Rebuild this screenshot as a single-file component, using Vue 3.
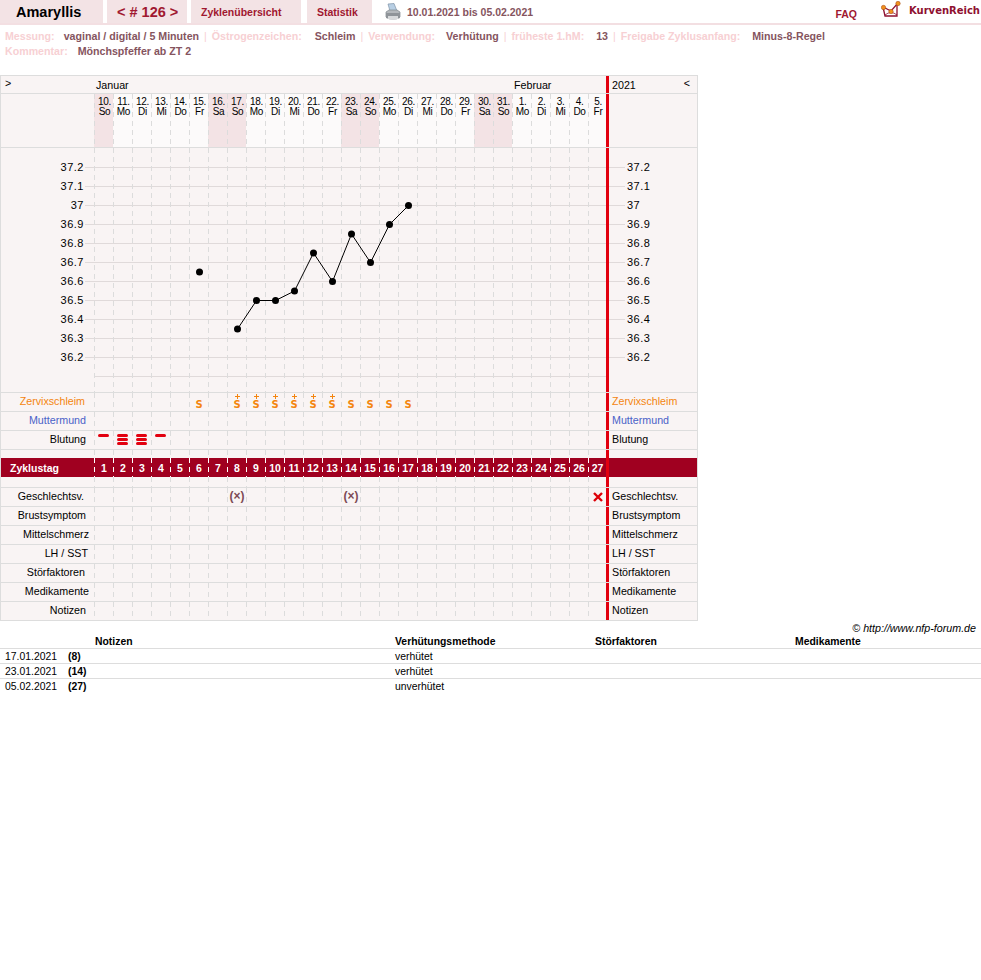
<template>
  <div class="page">
    <div class="nav">
      <div class="tab tab-name">Amaryllis</div>
      <div class="tab tab-num">&lt; # 126 &gt;</div>
      <div class="tab tab-link tab-zyklen">Zyklenübersicht</div>
      <div class="tab tab-link tab-stat">Statistik</div>
      <svg class="printer" width="16" height="18" viewBox="0 0 16 18">
        <path d="M3 1 L9 0.5 L12 8 L5 8 Z" fill="#b8cfe4" stroke="#7f93a8" stroke-width="0.7" />
        <path d="M1 9 L4 7 H12 L15 9 V14 H1 Z" fill="#b4b8bc" stroke="#80868c" stroke-width="0.7" />
        <path d="M1 10 H15 V15 Q8 18 1 15 Z" fill="#8f9499" />
        <path d="M3 13 H13 V16 Q8 17.5 3 16 Z" fill="#d8dadc" />
      </svg>
      <div class="period">10.01.2021 bis 05.02.2021</div>
      <div class="faq">FAQ</div>
      <div class="logo">
        <svg width="20" height="18" viewBox="0 0 20 18">
          <path d="M2 6 L4 15 H16 V3" fill="none" stroke="#8e1030" stroke-width="1.3" />
          <path d="M4 14 Q10 9 16 14" fill="none" stroke="#8e1030" stroke-width="0.8" />
          <path d="M2 6 L10 10 L17 2" fill="none" stroke="#8e1030" stroke-width="1.2" />
          <circle cx="2.5" cy="6.5" r="2.2" fill="#f0921e" stroke="#a04010" stroke-width="0.5" />
          <circle cx="10" cy="10.5" r="2.2" fill="#f0921e" stroke="#a04010" stroke-width="0.5" />
          <circle cx="17" cy="2.5" r="2.2" fill="#f0921e" stroke="#a04010" stroke-width="0.5" />
        </svg>
        <span class="logo-text">KurvenReich</span>
      </div>
    </div>

    <div class="info">
      <div class="info-line">
        <template v-for="(item, i) in info" :key="item.label">
          <span v-if="i" class="sep">|</span>
          <span class="info-label">{{ item.label }}</span>
          <span class="info-value" :style="{ marginLeft: item.gap + 'px' }">{{ item.value }}</span>
        </template>
      </div>
      <div class="info-line">
        <span class="info-label">Kommentar:</span>
        <span class="info-value">Mönchspfeffer ab ZT 2</span>
      </div>
    </div>

    <div class="chart">
      <div class="row row-head">
        <div class="label label-arrow">&gt;</div>
        <div class="cells">
          <div
            v-for="m in months"
            :key="m.name"
            class="month"
            :style="{ gridColumn: 'span ' + m.span }"
          >{{ m.name }}</div>
        </div>
        <div class="side side-head"><span>2021</span><span class="arrow-back">&lt;</span></div>
      </div>

      <div class="row row-days">
        <div class="label"></div>
        <div class="cells">
          <div
            v-for="d in days"
            :key="d.date"
            class="cell day"
            :class="{ weekend: d.weekend }"
          >
            <div>{{ d.date }}.</div>
            <div>{{ d.name }}</div>
          </div>
        </div>
        <div class="side"></div>
      </div>

      <div class="row row-plot">
        <div class="scale">
          <div v-for="t in scale" :key="t" class="tick">{{ t }}</div>
        </div>
        <svg class="plot" width="512" height="244" viewBox="0 0 512 244">
          <line
            v-for="(g, i) in gridYs"
            :key="'g' + i"
            x1="0"
            x2="512"
            :y1="g"
            :y2="g"
            stroke="#e0dada"
          />
          <line
            v-for="i in 27"
            :key="'v' + i"
            :x1="(i - 1) * 19 + 0.5"
            :x2="(i - 1) * 19 + 0.5"
            y1="0"
            y2="244"
            stroke="#dcdcdc"
            stroke-dasharray="5 4"
          />
          <polyline :points="curve" fill="none" stroke="#000" stroke-width="1" />
          <circle v-for="p in points" :key="p.x" :cx="p.x" :cy="p.y" r="3.5" fill="#000" />
        </svg>
        <div class="scale scale-right">
          <div v-for="t in scale" :key="t" class="tick tick-right">{{ t }}</div>
        </div>
      </div>

      <div v-for="r in topRows" :key="r.name" class="row">
        <div class="label" :class="r.cls" :style="{ paddingRight: r.pad + 'px' }">{{ r.name }}</div>
        <div class="cells">
          <div v-for="d in days" :key="d.idx" class="cell">
            <div v-if="r.name === 'Zervixschleim' && mucus[d.idx]" class="mucus">
              <i v-if="mucus[d.idx] === 'S+'" class="plus"></i>
              <span class="s">S</span>
            </div>
            <div v-if="r.name === 'Blutung' && bleeding[d.idx]" class="blood">
              <i v-for="n in bleeding[d.idx]" :key="n"></i>
            </div>
          </div>
        </div>
        <div class="side" :class="r.cls">{{ r.name }}</div>
      </div>

      <div class="row row-gap row-gap-top">
        <div class="label"></div>
        <div class="cells"><div v-for="d in days" :key="d.idx" class="cell"></div></div>
        <div class="side"></div>
      </div>

      <div class="row row-bar">
        <div class="label bar-label">Zyklustag</div>
        <div class="cells">
          <div v-for="d in days" :key="d.idx" class="cell bar-cell">{{ d.idx + 1 }}</div>
        </div>
        <div class="side"></div>
      </div>

      <div class="row row-gap row-gap-bottom">
        <div class="label"></div>
        <div class="cells"><div v-for="d in days" :key="d.idx" class="cell"></div></div>
        <div class="side"></div>
      </div>

      <div v-for="r in bottomRows" :key="r.name" class="row">
        <div class="label" :style="{ paddingRight: r.pad + 'px' }">{{ r.name }}</div>
        <div class="cells">
          <div v-for="d in days" :key="d.idx" class="cell">
            <template v-if="r.name === 'Geschlechtsv.'">
              <span v-if="d.idx === 7 || d.idx === 13" class="maybe">(×)</span>
              <svg v-if="d.idx === 26" class="cross" width="10" height="10" viewBox="0 0 10 10">
                <path d="M1 1 L9 9 M9 1 L1 9" stroke="#dd0008" stroke-width="2.4" />
              </svg>
            </template>
          </div>
        </div>
        <div class="side">{{ r.name }}</div>
      </div>
    </div>

    <div class="copyright">© http://www.nfp-forum.de</div>

    <div class="notes">
      <div class="notes-row notes-head">
        <div></div>
        <div></div>
        <div>Notizen</div>
        <div>Verhütungsmethode</div>
        <div>Störfaktoren</div>
        <div>Medikamente</div>
      </div>
      <div v-for="n in notes" :key="n.date" class="notes-row">
        <div>{{ n.date }}</div>
        <div class="notes-day">({{ n.day }})</div>
        <div></div>
        <div>{{ n.method }}</div>
        <div></div>
        <div></div>
      </div>
    </div>
  </div>
</template>

<script setup>
const info = [
  { label: 'Messung:', value: 'vaginal / digital / 5 Minuten', gap: 9 },
  { label: 'Östrogenzeichen:', value: 'Schleim', gap: 13 },
  { label: 'Verwendung:', value: 'Verhütung', gap: 11 },
  { label: 'früheste 1.hM:', value: '13', gap: 12 },
  { label: 'Freigabe Zyklusanfang:', value: 'Minus-8-Regel', gap: 12 }
]

const months = [
  { name: 'Januar', span: 22 },
  { name: 'Februar', span: 5 }
]

// 10.01.2021 is a Sunday
const weekdays = ['So', 'Mo', 'Di', 'Mi', 'Do', 'Fr', 'Sa']
const days = []
for (let i = 0; i < 27; i++) {
  const wd = weekdays[i % 7]
  days.push({
    idx: i,
    date: i < 22 ? i + 10 : i - 21,
    name: wd,
    weekend: wd === 'So' || wd === 'Sa'
  })
}

const scale = ['37.2', '37.1', '37', '36.9', '36.8', '36.7', '36.6', '36.5', '36.4', '36.3', '36.2']
const gridYs = []
for (let i = 0; i < 12; i++) gridYs.push(19.5 + i * 19)

const temps = {
  5: 36.65, 7: 36.35, 8: 36.5, 9: 36.5, 10: 36.55, 11: 36.75,
  12: 36.6, 13: 36.85, 14: 36.7, 15: 36.9, 16: 37
}
const points = Object.keys(temps).map((k) => ({
  x: Number(k) * 19 + 10.5,
  y: 57.5 + (37 - temps[k]) * 190
}))
// the first value stands alone, no line to the next one
const curve = points.slice(1).map((p) => p.x + ',' + p.y).join(' ')

const mucus = {
  5: 'S', 7: 'S+', 8: 'S+', 9: 'S+', 10: 'S+', 11: 'S+', 12: 'S+',
  13: 'S', 14: 'S', 15: 'S', 16: 'S'
}
const bleeding = { 0: 1, 1: 3, 2: 3, 3: 1 }

const topRows = [
  { name: 'Zervixschleim', cls: 'orange', pad: 9 },
  { name: 'Muttermund', cls: 'blue', pad: 8 },
  { name: 'Blutung', cls: '', pad: 8 }
]

const bottomRows = [
  { name: 'Geschlechtsv.', pad: 10 },
  { name: 'Brustsymptom', pad: 8 },
  { name: 'Mittelschmerz', pad: 5 },
  { name: 'LH / SST', pad: 6 },
  { name: 'Störfaktoren', pad: 9 },
  { name: 'Medikamente', pad: 5 },
  { name: 'Notizen', pad: 8 }
]

const notes = [
  { date: '17.01.2021', day: 8, method: 'verhütet' },
  { date: '23.01.2021', day: 14, method: 'verhütet' },
  { date: '05.02.2021', day: 27, method: 'unverhütet' }
]
</script>

<style scoped>
.page {
  width: 981px;
  font-family: "Liberation Sans", Arial, sans-serif;
  font-size: 10.7px;
  color: #000;
}

/* top navigation */
.nav {
  display: flex;
  align-items: stretch;
  height: 23px;
  border-bottom: 2px solid #f3dfe2;
}

.tab {
  display: flex;
  align-items: center;
  background: #f3e3e5;
  font-weight: bold;
  color: #a01830;
  margin-right: 4px;
}

.tab-name {
  width: 103px;
  box-sizing: border-box;
  padding-left: 16px;
  font-size: 14.5px;
  color: #000;
}

.tab-num {
  width: 80px;
  box-sizing: border-box;
  padding-left: 10px;
  font-size: 14.5px;
}

.tab-link {
  font-size: 10.5px;
}

.tab-zyklen {
  width: 110px;
  box-sizing: border-box;
  padding-left: 10px;
  margin-right: 6px;
}

.tab-stat {
  width: 65px;
  box-sizing: border-box;
  padding-left: 10px;
  margin-right: 13px;
}

.printer {
  margin-top: 3px;
}

.period {
  margin-left: 6px;
  line-height: 24px;
  font-weight: bold;
  font-size: 10.5px;
  color: #85545e;
}

.faq {
  margin-left: auto;
  margin-top: 8px;
  font-size: 10.5px;
  font-weight: bold;
  color: #a01830;
}

.logo {
  display: flex;
  align-items: flex-start;
  margin-left: 24px;
  margin-right: 1px;
  padding-top: 1px;
}

.logo-text {
  margin-left: 8px;
  margin-top: 4px;
  font-family: "DejaVu Sans", sans-serif;
  font-weight: bold;
  font-size: 10px;
  line-height: 11px;
  color: #8e1030;
}

/* info lines under the navigation */
.info {
  padding: 4px 0 0 5px;
  height: 50px;
  box-sizing: border-box;
  font-weight: bold;
  font-size: 10.65px;
}

.info-line {
  height: 15px;
  line-height: 15px;
  white-space: nowrap;
}

.info-label {
  color: #f7d0d3;
}

.info-value {
  margin-left: 10px;
  color: #85545e;
}

.sep {
  margin: 0 5px;
  color: #f7d0d3;
  font-weight: normal;
}

/* chart table */
.chart {
  width: 698px;
  box-sizing: border-box;
  border: 1px solid #ddd;
  border-bottom: none;
  background: #f9f4f4;
}

.row {
  display: flex;
  height: 19px;
  box-sizing: border-box;
  border-bottom: 1px solid #ddd;
  line-height: 16px;
}

.label {
  width: 93px;
  flex: none;
  box-sizing: border-box;
  text-align: right;
  white-space: nowrap;
}

.cells {
  width: 512px;
  flex: none;
  display: grid;
  grid-template-columns: repeat(26, 19px) 18px;
}

.cell {
  position: relative;
  text-align: center;
  padding-left: 1px;
  box-sizing: border-box;
  background: linear-gradient(#dcdcdc 5px, transparent 5px) 0 0 / 1px 9px repeat-y;
}

.side {
  width: 88px;
  flex: none;
  box-sizing: border-box;
  border-left: 3px solid #e2000f;
  padding-left: 3px;
  white-space: nowrap;
}

.orange {
  color: #f4850f;
}

.blue {
  color: #4a62c8;
}

.row-head {
  height: 18px;
  line-height: 18px;
}

.label-arrow {
  text-align: left;
  padding-left: 4px;
  line-height: 14px;
}

.month {
  padding-left: 2px;
}

.side-head {
  display: flex;
  justify-content: space-between;
  padding-right: 4px;
}

.arrow-back {
  line-height: 14px;
}

.row-days {
  height: 54px;
}

.day {
  padding-top: 3px;
  padding-left: 2px;
  font-size: 10px;
  line-height: 10px;
  letter-spacing: -0.3px;
  background-color: #fcfafa;
}

.weekend {
  background-color: #f3e3e5;
}

.row-plot {
  height: 245px;
}

.plot {
  display: block;
  flex: none;
}

.scale {
  width: 93px;
  flex: none;
  padding-top: 9px;
}

.tick {
  display: flex;
  align-items: center;
  justify-content: flex-end;
  height: 19px;
  font-size: 11px;
  letter-spacing: 0.5px;
}

.tick::after {
  content: "";
  width: 9px;
  height: 1px;
  margin-left: 1px;
  margin-top: 1px;
  background: #e0dada;
}

.scale-right {
  width: 88px;
  box-sizing: border-box;
  border-left: 3px solid #e2000f;
}

.tick-right {
  justify-content: flex-start;
}

.tick-right::after {
  display: none;
}

.tick-right::before {
  content: "";
  width: 16px;
  height: 1px;
  margin-right: 2px;
  margin-top: 1px;
  background: #e0dada;
}

.mucus {
  display: flex;
  flex-direction: column;
  align-items: center;
  color: #f4850f;
  position: absolute;
  left: 1px;
  right: 0;
  bottom: 2px;
}

.plus {
  display: block;
  width: 5px;
  height: 5px;
  margin-bottom: 1px;
  background:
    linear-gradient(#f4850f, #f4850f) center / 5px 1px no-repeat,
    linear-gradient(#f4850f, #f4850f) center / 1px 5px no-repeat;
}

.s {
  font-family: "DejaVu Sans", sans-serif;
  font-size: 10px;
  font-weight: bold;
  line-height: 9px;
}

.blood {
  display: flex;
  flex-direction: column;
  align-items: center;
  gap: 1px;
  margin-left: -1px;
  padding-top: 3px;
}

.blood i {
  display: block;
  width: 11px;
  height: 3px;
  border-radius: 2px;
  background: #e2000f;
}

.row-gap-top {
  height: 8px;
  border-bottom: none;
}

.row-gap-bottom {
  height: 11px;
}

.row-bar {
  border-bottom: none;
  background: #a00020;
  color: #fff;
  font-weight: bold;
  font-size: 10.5px;
  line-height: 20px;
}

.bar-label {
  text-align: left;
  padding-left: 9px;
}

.bar-cell {
  background-image: linear-gradient(#fff 5px, transparent 5px);
}

.maybe {
  font-size: 12px;
  font-weight: bold;
  color: #7d4a55;
}

.cross {
  position: absolute;
  left: 5px;
  top: 4px;
}

/* below the chart */
.copyright {
  width: 976px;
  height: 13px;
  line-height: 15px;
  text-align: right;
  font-style: italic;
}

.notes-row {
  display: grid;
  grid-template-columns: 63px 27px 300px 200px 200px 1fr;
  height: 15px;
  box-sizing: border-box;
  padding-left: 5px;
  font-size: 10.4px;
  line-height: 15px;
  border-bottom: 1px solid #ddd;
}

.notes-row:last-child {
  border-bottom: none;
}

.notes-head {
  font-weight: bold;
}

.notes-day {
  font-weight: bold;
}
</style>

<style>
html,
body {
  background: #fff;
}
</style>
